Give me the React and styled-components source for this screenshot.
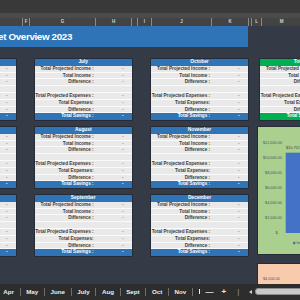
import React from 'react';
import styled, { createGlobalStyle } from 'styled-components';

const Global = createGlobalStyle`
  html, body { margin: 0; padding: 0; background: #343b47; }
  body { font-family: "Liberation Sans", Arial, sans-serif; }
`;

const Page = styled.div`
  width: 300px; height: 300px; overflow: hidden;
  display: flex; flex-direction: column; background: #343b47;
`;
const TopBar = styled.div`height: 13px; background: #393939; flex: none;`;
const SubBar = styled.div`height: 5px; background: #4b4b4b; flex: none;`;
const ColHeader = styled.div`
  height: 8px; background: #434343; display: flex; flex: none; overflow: hidden;
`;
const ColCell = styled.div`
  width: ${p => p.$w}px; flex: none; box-sizing: border-box;
  border-left: ${p => (p.$first ? 'none' : '1px solid #8a8a8a')};
  color: #d2d2d2; font: 700 4.5px/8px "Liberation Sans", sans-serif; text-align: center;
`;

const Sheet = styled.div`
  flex: 1; overflow: hidden; display: flex; flex-direction: column; background: #343b47;
`;
const Banner = styled.div`
  height: 20.7px; width: 248px; flex: none; background: #2e74b7;
  display: flex; align-items: center; overflow: hidden;
`;
const TitleBox = styled.div`
  width: 72px; flex: none; display: flex; justify-content: flex-end;
`;
const Title = styled.span`
  color: #fff; white-space: nowrap; flex: none;
  font: 700 9.8px "Liberation Sans", sans-serif; letter-spacing: -0.35px;
`;
const Board = styled.div`
  display: flex; align-items: flex-start; padding-top: 12.3px; flex: none;
`;
const Column = styled.div`
  flex: none; width: ${p => p.$w}px; margin-left: ${p => p.$ml}px;
  display: flex; flex-direction: column; gap: 6.8px;
`;
const SideColumn = styled.div`
  flex: none; width: 140px; margin-left: 9px; display: flex; flex-direction: column;
`;

const Card = styled.div`
  width: ${p => p.$w}px; margin-left: ${p => p.$ml || 0}px;
  display: flex; flex-direction: column; box-shadow: 0 0 0 0.6px #1d2430;
`;
const CardHead = styled.div`
  height: 6.8px; background: ${p => p.$color}; color: #fff; text-align: center;
  font: 700 4.8px/6.8px "Liberation Sans", sans-serif; white-space: nowrap; overflow: hidden;
`;
const Row = styled.div`
  height: 6.8px; box-sizing: border-box; display: grid; grid-template-columns: 60px 1fr;
  background: ${p => p.$bg || '#e9e9e9'}; border-bottom: ${p => (p.$foot ? 'none' : '0.6px solid #fafafa')};
  color: ${p => (p.$foot ? '#fff' : '#3c3c3c')};
  font: 700 4.6px/6.4px "Liberation Sans", sans-serif;
`;
const Label = styled.div`
  display: flex; justify-content: flex-end; padding-right: 1px; white-space: nowrap;
`;
const Value = styled.div`
  text-align: right; padding-right: 8.5px; color: ${p => (p.$foot ? '#fff' : '#8a8a8a')};
`;

const ChartPanel = styled.div`
  margin-top: 5.8px; height: 129px; box-sizing: border-box; width: 140px;
  background: #a9d08e; border: 1px solid #262c35;
`;
const PeachPanel = styled.div`
  margin-top: 7.7px; height: 30px; box-sizing: border-box; width: 140px;
  background: #f8cbad; border: 1px solid #262c35;
`;

const TabBar = styled.div`
  height: 16.5px; flex: none; background: #2d2d2d; display: flex; align-items: center; overflow: hidden;
`;
const Tab = styled.div`
  padding: 0 5.65px; color: #ededed; font: 700 6.2px/16px "Liberation Sans", sans-serif;
  margin-left: ${p => p.$ml || 0}px; white-space: nowrap;
`;
const TabSep = styled.div`width: 1px; height: 8px; background: #6e6e6e; flex: none;`;
const Ctrl = styled.div`
  color: ${p => p.$c || '#eaeaea'}; font: ${p => p.$wgt || 700} 8px/16px "Liberation Sans", sans-serif;
  margin-left: ${p => p.$ml}px; flex: none;
`;
const Grip = styled.div`width: 1.6px; height: 5px; background: #f0f0f0; margin-left: 6px; flex: none;`;
const Arrow = styled.div`
  width: 0; height: 0; border-top: 2.2px solid transparent; border-bottom: 2.2px solid transparent;
  border-right: 3px solid #d0d0d0; margin-left: ${p => p.$ml}px; flex: none;
`;
const Scroll = styled.div`
  width: 60px; height: 5px; border-radius: 3px; background: #c8c8c8; border: 0.6px solid #8c8c8c;
  margin-left: 3px; flex: none;
`;

const LABELS = [
  'Total Projected Income :', 'Total Income :', 'Difference :', '',
  'Total Projected Expenses :', 'Total Expenses:', 'Difference :',
];

function MonthCard({ name, w, ml, color = '#2e74b7' }) {
  return (
    <Card $w={w} $ml={ml}>
      <CardHead $color={color}>{name}</CardHead>
      {LABELS.map((l, i) => (
        <Row key={i}>
          <Label><span>{l}</span></Label>
          <Value>{l ? '-' : ''}</Value>
        </Row>
      ))}
      <Row $foot $bg={color}>
        <Label><span>Total Savings :</span></Label>
        <Value $foot>-</Value>
      </Row>
    </Card>
  );
}

const AXIS = ['$-', '$2,000.00', '$4,000.00', '$6,000.00', '$8,000.00', '$10,000.00', '$12,000.00'];

function Chart() {
  return (
    <svg width="138" height="127" viewBox="0 0 138 127">
      {AXIS.map((t, i) => (
        <text key={t} x={i === 0 ? 21 : 24} y={107.4 - i * 15.05} fontSize="3.8" fill="#555"
          textAnchor="end" fontFamily="Liberation Sans, sans-serif">{t}</text>
      ))}
      <rect x="27.7" y="25.7" width="60" height="80.3" fill="#4472c4" />
      <text x="28" y="22" fontSize="3.8" fill="#444" fontFamily="Liberation Sans, sans-serif">$10,752.41</text>
      <rect x="35" y="114.8" width="2.4" height="2.4" fill="#4472c4" />
      <text x="38.6" y="117.4" fontSize="3.8" fill="#444" fontFamily="Liberation Sans, sans-serif">Income</text>
    </svg>
  );
}

const COLS = [
  [22, ''], [7, 'F'], [66, 'G'], [36, 'H'], [6, ''], [14, 'I'], [60, 'J'], [37, 'K'], [3, ''], [10, 'L'], [40, 'M'],
];
const TABS = ['Apr', 'May', 'June', 'July', 'Aug', 'Sept', 'Oct', 'Nov'];

export default function App() {
  return (
    <Page>
      <Global />
      <TopBar />
      <SubBar />
      <ColHeader>
        {COLS.map(([w, l], i) => <ColCell key={i} $w={w} $first={i === 0}>{l}</ColCell>)}
      </ColHeader>
      <Sheet>
        <Banner>
          <TitleBox><Title>Budget Overview 2023</Title></TitleBox>
        </Banner>
        <Board>
          <Column $w={97.5} $ml={-81.5}>
            <MonthCard name="April" w={97.5} />
            <MonthCard name="May" w={97.5} />
            <MonthCard name="June" w={97.5} />
          </Column>
          <Column $w={97.5} $ml={18.5}>
            <MonthCard name="July" w={97.5} />
            <MonthCard name="August" w={97.5} />
            <MonthCard name="September" w={97.5} />
          </Column>
          <Column $w={97} $ml={19}>
            <MonthCard name="October" w={97} />
            <MonthCard name="November" w={97} />
            <MonthCard name="December" w={97} />
          </Column>
          <SideColumn>
            <MonthCard name="Total for Year" w={97.5} ml={3} color="#00b050" />
            <ChartPanel><Chart /></ChartPanel>
            <PeachPanel>
              <svg width="138" height="28" viewBox="0 0 138 28">
                <text x="5" y="15.6" fontSize="3.8" fill="#555" fontFamily="Liberation Sans, sans-serif">$4,000.00</text>
              </svg>
            </PeachPanel>
          </SideColumn>
        </Board>
      </Sheet>
      <TabBar>
        {TABS.map((t, i) => (
          <React.Fragment key={t}>
            <Tab $ml={i === 0 ? -2.4 : 0}>{t}</Tab>
            <TabSep />
          </React.Fragment>
        ))}
        <Grip />
        <Ctrl $ml={5}>—</Ctrl>
        <Ctrl $ml={8}>+</Ctrl>
        <Ctrl $ml={11} $c="#9a9a9a" $wgt={400}>|</Ctrl>
        <Arrow $ml={10} />
        <Scroll />
      </TabBar>
    </Page>
  );
}
